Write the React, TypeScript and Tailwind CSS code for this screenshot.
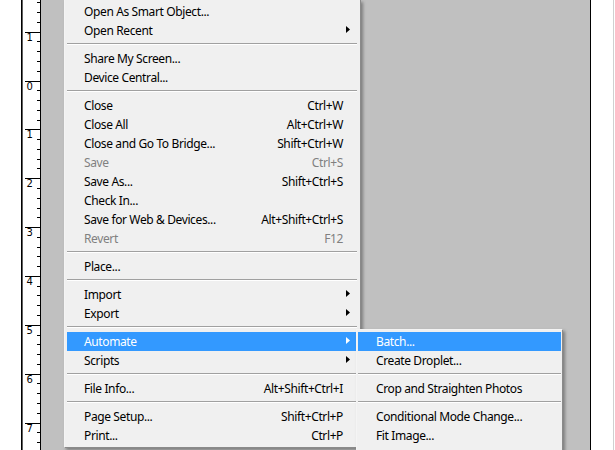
import React from "react";

type Item =
  | { sep: true }
  | { sep?: false; t: string; k?: string; arrow?: boolean; dis?: boolean; hi?: boolean };

const main: Item[] = [
  { t: "Open As Smart Object..." },
  { t: "Open Recent", arrow: true },
  { sep: true },
  { t: "Share My Screen..." },
  { t: "Device Central..." },
  { sep: true },
  { t: "Close", k: "Ctrl+W" },
  { t: "Close All", k: "Alt+Ctrl+W" },
  { t: "Close and Go To Bridge...", k: "Shift+Ctrl+W" },
  { t: "Save", k: "Ctrl+S", dis: true },
  { t: "Save As...", k: "Shift+Ctrl+S" },
  { t: "Check In..." },
  { t: "Save for Web & Devices...", k: "Alt+Shift+Ctrl+S" },
  { t: "Revert", k: "F12", dis: true },
  { sep: true },
  { t: "Place..." },
  { sep: true },
  { t: "Import", arrow: true },
  { t: "Export", arrow: true },
  { sep: true },
  { t: "Automate", arrow: true, hi: true },
  { t: "Scripts", arrow: true },
  { sep: true },
  { t: "File Info...", k: "Alt+Shift+Ctrl+I" },
  { sep: true },
  { t: "Page Setup...", k: "Shift+Ctrl+P" },
  { t: "Print...", k: "Ctrl+P" },
];

const sub: Item[] = [
  { t: "Batch...", hi: true },
  { t: "Create Droplet..." },
  { sep: true },
  { t: "Crop and Straighten Photos" },
  { sep: true },
  { t: "Conditional Mode Change..." },
  { t: "Fit Image..." },
];

function Arrow({ white }: { white?: boolean }) {
  return (
    <svg width="5" height="7" viewBox="0 0 5 7" className="absolute right-[6px] top-[5px]">
      <path d="M0 0 L4 3.5 L0 7 Z" fill={white ? "#ffffff" : "#000000"} />
    </svg>
  );
}

function Rows({ items, textPad }: { items: Item[]; textPad: string }) {
  return (
    <>
      {items.map((it, i) =>
        it.sep ? (
          <div key={i} className="h-[9px] pt-[3px]">
            <div className="h-px bg-[#a0a0a0]" />
            <div className="h-px bg-white" />
          </div>
        ) : (
          <div
            key={i}
            className={
              "relative flex h-[19px] items-center justify-between pr-[14px] pt-px tracking-[-0.38px] " +
              textPad +
              " " +
              (it.hi ? "bg-[#3399ff] text-white" : it.dis ? "text-[#808080]" : "text-black")
            }
          >
            <span>{it.t}</span>
            {it.k && <span>{it.k}</span>}
            {it.arrow && <Arrow white={it.hi} />}
          </div>
        )
      )}
    </>
  );
}

function Ruler() {
  const majors: number[] = [];
  const minors: number[] = [];
  const step = 48.85;
  const first = 31.7 - step;
  for (let k = 0; k < 11; k++) {
    const y = first + k * step;
    majors.push(y);
    for (let m = 1; m < 5; m++) minors.push(y + (m * step) / 5);
  }
  const labels = ["1", "0", "1", "2", "3", "4", "5", "6", "7"];
  return (
    <svg width="20" height="450" viewBox="0 0 20 450" className="block shrink-0">
      <rect x="0" y="0" width="20" height="450" fill="#ffffff" />
      <rect x="0" y="0" width="1" height="450" fill="#000000" />
      <rect x="1" y="0" width="1" height="450" fill="#606060" />
      <rect x="19" y="0" width="1" height="450" fill="#000000" />
      {majors.map((y, i) => (
        <rect key={"M" + i} x="4" y={Math.round(y)} width="15" height="1" fill="#000000" />
      ))}
      {minors.map((y, i) => (
        <rect key={"m" + i} x="16" y={Math.round(y)} width="3" height="1" fill="#000000" />
      ))}
      {labels.map((l, i) => (
        <text
          key={"t" + i}
          x="5.5"
          y={Math.round(majors[i + 1]) + 9}
          fontSize="10"
          fontFamily="'DejaVu Sans', sans-serif"
          fill="#000000"
        >
          {l}
        </text>
      ))}
    </svg>
  );
}

export default function App() {
  return (
    <div
      className="relative flex h-[450px] w-[615px] overflow-hidden bg-white text-[12px]"
      style={{ fontFamily: "'Noto Sans', 'Open Sans', sans-serif" }}
    >
      <div className="w-[21px] shrink-0 bg-white" />
      <Ruler />
      <div className="relative flex-1 bg-[#c0c0c0]">
        {/* main menu */}
        <div className="absolute left-[23px] top-0 w-[297px] border-b border-l border-r border-b-[#8a8a8a] border-l-[#f4f4f4] border-r-[#8a8a8a] bg-[#f0f0f0] pb-[2px] pl-[2px] pr-[3px] pt-[2px] shadow-[2px_2px_3px_rgba(0,0,0,0.35)]">
          <Rows items={main} textPad="pl-[17px]" />
        </div>
        {/* submenu */}
        <div className="absolute left-[315px] top-[329px] w-[207px] border border-b-[#8a8a8a] border-l-[#f4f4f4] border-r-[#8a8a8a] border-t-[#f4f4f4] bg-[#f0f0f0] pb-[20px] pl-px pr-px pt-[2px] shadow-[2px_2px_3px_rgba(0,0,0,0.35)]">
          <Rows items={sub} textPad="pl-[18px]" />
        </div>
      </div>
      <div className="w-px shrink-0 bg-black" />
      <div className="w-[22px] shrink-0 bg-white" />
      <div className="w-px shrink-0 bg-[#d0d0d0]" />
      <div className="w-px shrink-0 bg-white" />
    </div>
  );
}
